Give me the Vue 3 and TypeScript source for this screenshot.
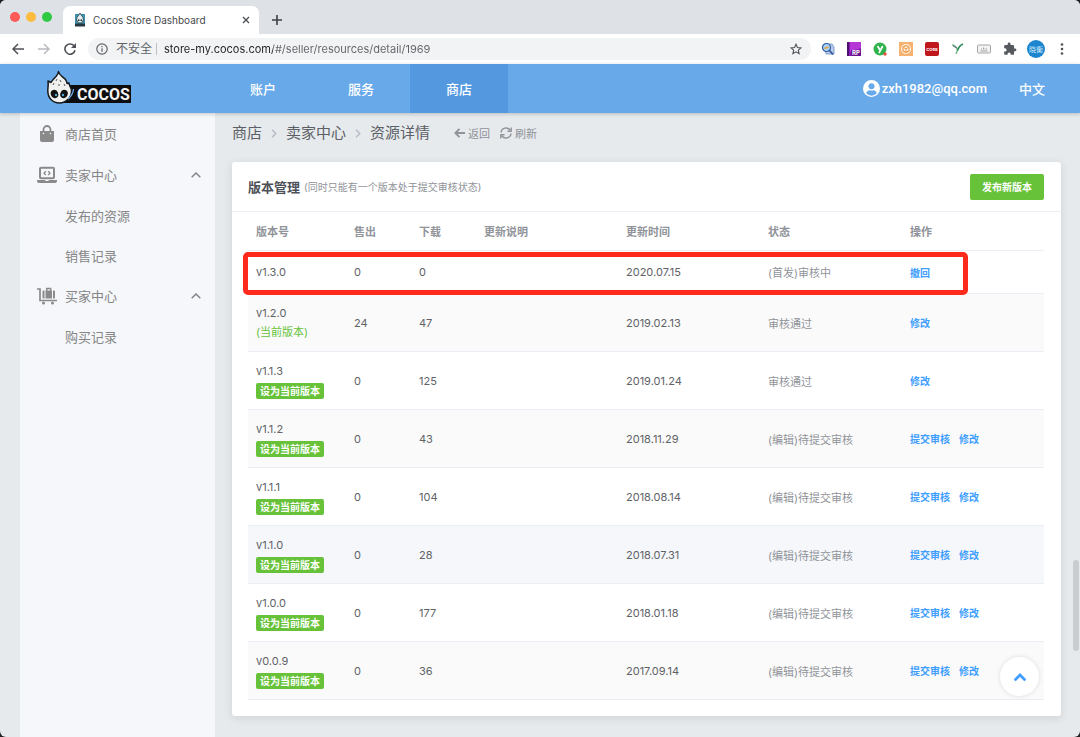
<script setup lang="ts">
import { ref } from 'vue'

interface Version {
  name: string
  sold: number
  downloads: number
  date: string
  status: string
  actions: string[]
  current?: boolean
  settable?: boolean
  hover?: boolean
}

const url = ref('store-my.cocos.com/#/seller/resources/detail/1969')

const columns = ['版本号', '售出', '下载', '更新说明', '更新时间', '状态', '操作']
const pending = '(编辑)待提交审核'
const both = ['提交审核', '修改']

const versions: Version[] = [
  { name: 'v1.3.0', sold: 0, downloads: 0, date: '2020.07.15', status: '(首发)审核中', actions: ['撤回'] },
  { name: 'v1.2.0', sold: 24, downloads: 47, date: '2019.02.13', status: '审核通过', actions: ['修改'], current: true },
  { name: 'v1.1.3', sold: 0, downloads: 125, date: '2019.01.24', status: '审核通过', actions: ['修改'], settable: true },
  { name: 'v1.1.2', sold: 0, downloads: 43, date: '2018.11.29', status: pending, actions: both, settable: true },
  { name: 'v1.1.1', sold: 0, downloads: 104, date: '2018.08.14', status: pending, actions: both, settable: true },
  { name: 'v1.1.0', sold: 0, downloads: 28, date: '2018.07.31', status: pending, actions: both, settable: true, hover: true },
  { name: 'v1.0.0', sold: 0, downloads: 177, date: '2018.01.18', status: pending, actions: both, settable: true },
  { name: 'v0.0.9', sold: 0, downloads: 36, date: '2017.09.14', status: pending, actions: both, settable: true },
]
</script>

<template>
  <div class="window">
    <div class="tabstrip">
      <div class="lights"><i class="red"></i><i class="yellow"></i><i class="green"></i></div>
      <div class="tab">
        <svg class="favicon" width="10" height="14" viewBox="0 0 10 14">
          <rect y="1" width="10" height="12" fill="#3d93ad" />
          <path d="M5 0c.5 2 3.500 3.500 3.500 6.500 0 2-1.500 3.500-3.500 3.500s-3.500-1.500-3.500-3.500C1.500 3.500 4.500 2 5 0z" fill="#e4eef0" stroke="#26383f" stroke-width=".8" />
          <circle cx="3.600" cy="7.200" r="1" fill="#26383f" /><circle cx="6.400" cy="7.200" r="1" fill="#26383f" />
          <rect y="10.500" width="10" height="3" fill="#26383f" />
        </svg>
        <span class="tab-title">Cocos Store Dashboard</span>
        <button class="icon-btn" aria-label="Close tab">
          <svg width="8" height="8" viewBox="0 0 8 8"><path d="M1 1l6 6M7 1L1 7" stroke="#4a4d51" stroke-width="1.300" /></svg>
        </button>
      </div>
      <button class="icon-btn new-tab" aria-label="New tab">
        <svg width="10" height="10" viewBox="0 0 10 10"><path d="M5 0v10M0 5h10" stroke="#3c4043" stroke-width="1.600" /></svg>
      </button>
    </div>

    <div class="toolbar">
      <button class="icon-btn" aria-label="Back">
        <svg width="12" height="12" viewBox="0 0 12 12" fill="none" stroke="#4f5256" stroke-width="1.500"><path d="M12 6H1M6 1L1 6l5 5" /></svg>
      </button>
      <button class="icon-btn" aria-label="Forward">
        <svg width="12" height="12" viewBox="0 0 12 12" fill="none" stroke="#b9bbbe" stroke-width="1.500"><path d="M0 6h11M6 1l5 5-5 5" /></svg>
      </button>
      <button class="icon-btn" aria-label="Reload">
        <svg width="12" height="12" viewBox="0 0 12 12" fill="none" stroke="#4f5256" stroke-width="1.600"><path d="M10.300 3.300A5.100 5.100 0 1 0 11 7.200" /><path d="M12 0v5H7z" fill="#4f5256" stroke="none" /></svg>
      </button>
      <div class="omnibox">
        <svg width="12" height="12" viewBox="0 0 12 12" fill="none" stroke="#5f6368" stroke-width="1.200"><circle cx="6" cy="6" r="5.200" /><path d="M6 5.200v3.600M6 3v1.300" /></svg>
        <label class="insecure" for="address">不安全</label>
        <span class="bar"></span>
        <input id="address" v-model="url" class="address" type="text" />
        <button class="icon-btn" aria-label="Bookmark">
          <svg width="12" height="12" viewBox="0 0 24 24" fill="none" stroke="#4f5256" stroke-width="2.200"><path d="M12 2.500l2.900 6.500 7.100.7-5.300 4.700 1.500 7-6.200-3.700-6.200 3.700 1.500-7L2 9.700 9.100 9z" /></svg>
        </button>
      </div>
      <div class="extensions">
        <svg viewBox="0 0 14 14"><path d="M4 2h7l2 3v7H5z" fill="#b9cdea" stroke="#6d8fc7" stroke-width=".8" /><circle cx="5.500" cy="5.500" r="4" fill="#a9d4f5" stroke="#31599f" stroke-width="1.200" /><path d="M3.500 6.500l4-1.500" stroke="#e7a23c" stroke-width="1.600" /><path d="M8 8l4 4.500" stroke="#31599f" stroke-width="1.800" /></svg>
        <svg viewBox="0 0 14 14"><path d="M0 0h14v14H0z" fill="#8a1ab5" /><path d="M3 0h11v6L3 10z" fill="#b437d6" /><path d="M0 0h2v14H0z" fill="#4c1168" /><path d="M4 8h10v6H4z" fill="#6a1290" /><text x="5" y="13" fill="#fff" font-size="6" font-weight="700">RP</text></svg>
        <svg viewBox="0 0 14 14"><circle cx="7" cy="7" r="6.500" fill="#2fb34c" /><path d="M4.500 4l2.500 4M9.700 4L6 11" stroke="#fff" stroke-width="1.700" /><circle cx="12" cy="12" r="1.700" fill="#e8503e" /></svg>
        <svg viewBox="0 0 14 14"><path d="M0 0h14v14H0z" fill="#f8b26f" /><circle cx="7" cy="7" r="5" fill="#fff4e6" /><path d="M7 3.500l3 1.700v3.600l-3 1.700-3-1.700V5.200z" fill="none" stroke="#f09b4e" stroke-width="1.200" /><path d="M4.500 5.500L7 7l2.500-1.500M7 7v3" fill="none" stroke="#f09b4e" /></svg>
        <svg viewBox="0 0 14 14"><rect width="14" height="14" rx="2" fill="#c0171d" /><text x="7" y="8.500" fill="#fff" font-size="4" font-weight="700" text-anchor="middle">CORS</text></svg>
        <svg viewBox="0 0 14 14"><path d="M1 3c3 0 4.500 2 5.500 5L5 12" fill="none" stroke="#7cb98a" stroke-width="1.500" /><path d="M12 2c-3 1-4.500 4-5.500 6.500" fill="none" stroke="#2f8f5c" stroke-width="1.700" /><path d="M2 4l4 2" stroke="#55707c" /></svg>
        <svg viewBox="0 0 14 14"><rect x=".5" y="3" width="13" height="8" rx="1" fill="#f3f3f3" stroke="#a6a6a6" /><path d="M3.500 9h7M4.500 7.500v-1M6.500 7.500V5.500M8 7.500v-1M9.500 7.500v-1" stroke="#8c8c8c" stroke-width=".8" /></svg>
        <svg viewBox="0 0 24 24"><path d="M20.500 11H19V7a2 2 0 0 0-2-2h-4V3.500a2.500 2.500 0 0 0-5 0V5H4a2 2 0 0 0-2 2v3.800h1.500a2.700 2.700 0 0 1 0 5.400H2V20a2 2 0 0 0 2 2h3.800v-1.500a2.700 2.700 0 0 1 5.400 0V22H17a2 2 0 0 0 2-2v-4h1.500a2.500 2.500 0 0 0 0-5z" fill="#56595e" /></svg>
      </div>
      <button class="avatar">晓衡</button>
      <button class="icon-btn" aria-label="Menu">
        <svg width="4" height="12" viewBox="0 0 4 12" fill="#4f5256"><circle cx="2" cy="1.500" r="1.300" /><circle cx="2" cy="6" r="1.300" /><circle cx="2" cy="10.500" r="1.300" /></svg>
      </button>
    </div>

    <header class="header">
      <a class="logo" href="#">
        <svg width="86" height="36" viewBox="0 0 86 36">
          <path d="M24 16h61v18H18z" fill="#0d0d0f" />
          <path d="M12.500 2.500c.5 4 4.500 5 7 8 1 1.300 1.300 2.500 1.500 4l2-.5c-.3 2 2 4 2.500 7 .5 7-5 13-12 13S1.700 29 1.800 21.500c0-3 .8-6 .2-9.500l3 1.500C6.500 10 12 7.500 12.500 2.500z" fill="#f1f1ef" stroke="#17191c" stroke-width="1.500" stroke-linejoin="round" />
          <path d="M22 30q5-4 5.500-10" fill="none" stroke="#6aa8e8" stroke-width="1.300" />
          <path d="M10 12l1-2M15 13l-1-2M7 16l1-2M13 17v-2M19 17l-1-2" stroke="#55585c" />
          <ellipse cx="8.500" cy="25" rx="3.700" ry="4.200" transform="rotate(-20 8.500 25)" fill="#111" /><ellipse cx="18" cy="25" rx="3.700" ry="4.200" transform="rotate(20 18 25)" fill="#111" />
          <circle cx="10" cy="26" r="1.200" fill="#4ba7d8" /><circle cx="17" cy="26" r="1.200" fill="#4ba7d8" />
          <text x="31" y="31" fill="#f4f4f4" font-family="Roboto, sans-serif" font-weight="700" font-size="16">COCOS</text>
        </svg>
      </a>
      <nav class="nav">
        <a href="#">账户</a>
        <a href="#">服务</a>
        <a href="#" class="active">商店</a>
      </nav>
      <a class="user" href="#">
        <svg width="17" height="17" viewBox="0 0 17 17"><circle cx="8.500" cy="8.500" r="8.500" fill="#fff" /><circle cx="8.500" cy="6.300" r="3" fill="#68a9ea" /><path d="M3.200 13.200c.6-2 2-2.900 3.600-2.900.6.300 2.800.300 3.400 0 1.600 0 3 .9 3.600 2.900a7 7 0 0 1-10.600 0z" fill="#68a9ea" /></svg>
        <span>zxh1982@qq.com</span>
      </a>
      <a class="lang" href="#">中文</a>
    </header>

    <div class="body">
      <aside class="sidebar">
        <a href="#">
          <svg width="20" height="18" viewBox="0 0 20 18"><path d="M3 6h14v9a2 2 0 0 1-2 2H5a2 2 0 0 1-2-2z" fill="#8a8a8a" /><path d="M6.500 8V4.500a3.500 3.500 0 0 1 7 0V8" fill="none" stroke="#8a8a8a" stroke-width="1.800" /><circle cx="6.500" cy="8.500" r=".8" fill="#f5f7fb" /><circle cx="13.500" cy="8.500" r=".8" fill="#f5f7fb" /></svg>
          <span>商店首页</span>
        </a>
        <a href="#">
          <svg width="20" height="18" viewBox="0 0 20 18" fill="none" stroke="#8a8a8a"><rect x="3" y="1.800" width="14" height="10.500" rx="1" stroke-width="2" /><path d="M8.800 5.300L7 7.200l1.800 1.900M11.200 5.300L13 7.200l-1.800 1.900" stroke-width="1.300" /><path d="M0 14h8l.6 1h2.800l.6-1h8v1a2 2 0 0 1-2 2H2a2 2 0 0 1-2-2z" fill="#8a8a8a" stroke="none" /></svg>
          <span>卖家中心</span>
          <svg class="chev" width="10" height="6" viewBox="0 0 10 6"><path d="M.7 5.300L5 1l4.300 4.300" /></svg>
        </a>
        <a href="#" class="sub">发布的资源</a>
        <a href="#" class="sub">销售记录</a>
        <a href="#">
          <svg width="20" height="18" viewBox="0 0 20 18"><path d="M0 2h3v11.500h17" fill="none" stroke="#8a8a8a" stroke-width="1.700" /><circle cx="6.500" cy="16" r="1.500" fill="#8a8a8a" /><circle cx="15.500" cy="16" r="1.500" fill="#8a8a8a" /><path d="M8.500 3.500h6.500v8H8.500zM5.500 4.500q0-1 1-1h1v8h-1q-1 0-1-1zM16 3.500h1q1 0 1 1v6q0 1-1 1h-1z" fill="#8a8a8a" /><path d="M9.700 4V1.500h4V4" fill="none" stroke="#8a8a8a" stroke-width="1.400" /></svg>
          <span>买家中心</span>
          <svg class="chev" width="10" height="6" viewBox="0 0 10 6"><path d="M.7 5.300L5 1l4.300 4.300" /></svg>
        </a>
        <a href="#" class="sub">购买记录</a>
      </aside>

      <main class="main">
        <div class="crumbs">
          <a href="#">商店</a>
          <svg class="sep" width="6" height="9" viewBox="0 0 6 9"><path d="M1 .8l3.700 3.700L1 8.200" /></svg>
          <a href="#">卖家中心</a>
          <svg class="sep" width="6" height="9" viewBox="0 0 6 9"><path d="M1 .8l3.700 3.700L1 8.200" /></svg>
          <a href="#">资源详情</a>
          <div class="tools">
            <button>
              <svg width="11" height="10" viewBox="0 0 11 10" fill="none" stroke="#909399" stroke-width="1.800"><path d="M11 5H1.500M5.500.8L1.300 5l4.200 4.200" /></svg>返回
            </button>
            <button>
              <svg width="12" height="12" viewBox="0 0 12 12" fill="none" stroke="#909399" stroke-width="1.400"><path d="M1 5.500A5 5 0 0 1 10 3M11 6.500A5 5 0 0 1 2 9M11.200.5v3.700H7.500M.8 11.500V7.800h3.700" /></svg>刷新
            </button>
          </div>
        </div>

        <section class="card">
          <div class="card-head">
            <h1>版本管理</h1>
            <small>(同时只能有一个版本处于提交审核状态)</small>
            <button class="publish">发布新版本</button>
          </div>
          <div class="table-wrap">
            <table>
              <colgroup><col class="c-name" /><col class="c-num" /><col class="c-num" /><col /><col /><col /><col /></colgroup>
              <thead>
                <tr><th v-for="c in columns" :key="c" scope="col">{{ c }}</th></tr>
              </thead>
              <tbody>
                <tr v-for="v in versions" :key="v.name" :class="{ hover: v.hover, tall: v.current || v.settable }">
                  <td>
                    <div class="name">{{ v.name }}</div>
                    <div v-if="v.current" class="current">(当前版本)</div>
                    <button v-if="v.settable" class="set">设为当前版本</button>
                  </td>
                  <td>{{ v.sold }}</td>
                  <td>{{ v.downloads }}</td>
                  <td></td>
                  <td>{{ v.date }}</td>
                  <td class="status">{{ v.status }}</td>
                  <td><button v-for="a in v.actions" :key="a" class="act">{{ a }}</button></td>
                </tr>
              </tbody>
            </table>
            <div class="marker"></div>
          </div>
        </section>
      </main>

      <button class="to-top" aria-label="Back to top">
        <svg width="12" height="8" viewBox="0 0 12 8"><path d="M1.500 6.500L6 2l4.500 4.500" fill="none" stroke="#409eff" stroke-width="2.800" stroke-linecap="round" /></svg>
      </button>
      <div class="scroll-thumb"></div>
    </div>
  </div>
</template>

<style>
body {
  margin: 0;
  background: #222;
}
</style>

<style scoped>
* {
  box-sizing: border-box;
}
.window {
  display: flex;
  flex-direction: column;
  min-height: 100vh;
  overflow: hidden;
  border-radius: 6px;
  background: #e6eaed;
  font-family: Inter, 'Noto Sans CJK SC', sans-serif;
}
button {
  border: 0;
  padding: 0;
  background: none;
  font-family: inherit;
  cursor: pointer;
}
a {
  color: inherit;
  text-decoration: none;
}
svg {
  display: block;
  flex: none;
}
.icon-btn {
  display: flex;
  align-items: center;
  justify-content: center;
}

/* Browser chrome */
.tabstrip {
  display: flex;
  align-items: center;
  height: 34px;
  padding-left: 10px;
  background: #dee1e6;
}
.lights {
  display: flex;
  gap: 6px;
  width: 53px;
}
.lights i {
  width: 10px;
  height: 10px;
  border-radius: 50%;
}
.red { background: #fc5b57; }
.yellow { background: #fdbc40; }
.green { background: #2fca44; }
.tab {
  display: flex;
  align-items: center;
  align-self: flex-end;
  width: 196px;
  height: 28px;
  padding: 0 9px 0 12px;
  border-radius: 7px 7px 0 0;
  background: #fff;
}
.tab-title {
  flex: 1;
  margin-left: 8px;
  font-size: 10px;
  color: #45484c;
}
.new-tab {
  margin-left: 13px;
  padding-top: 6px;
}
.toolbar {
  display: flex;
  align-items: center;
  gap: 14px;
  height: 30px;
  padding: 0 16px 0 12px;
  background: #fff;
}
.omnibox {
  display: flex;
  flex: 1;
  align-items: center;
  height: 22px;
  margin: 0 -4px 0 -2px;
  padding: 0 9px 0 8px;
  border-radius: 11px;
  background: #f1f3f4;
}
.insecure {
  margin-left: 8px;
  font-size: 12px;
  line-height: 20px;
  color: #5f6368;
}
.bar {
  width: 1px;
  height: 12px;
  margin: 0 7px 0 4px;
  background: #bdc1c6;
}
.address {
  flex: 1;
  min-width: 0;
  border: 0;
  padding: 0;
  outline: 0;
  color: transparent;
  background: linear-gradient(90deg, #202124 109px, #5f6368 109px);
  background-clip: text;
  font: 11px Inter, sans-serif;
}
.extensions {
  display: flex;
  gap: 12px;
}
.extensions svg {
  width: 14px;
  height: 14px;
}
.avatar {
  width: 18px;
  height: 18px;
  margin: 0 1px 0 -4px;
  border-radius: 50%;
  background: #1d86cf;
  color: #d9eefc;
  font-size: 7px;
  white-space: nowrap;
}

/* Site header */
.header {
  position: relative;
  z-index: 1;
  display: flex;
  align-items: center;
  height: 49px;
  padding: 0 35px 0 46px;
  background: #68a9ea;
  box-shadow: 0 1px 4px rgba(0, 0, 0, 0.2);
  color: #fff;
  font-size: 13px;
  font-weight: 500;
}
.logo {
  width: 168px;
  padding-bottom: 4px;
}
.nav {
  display: flex;
  align-self: stretch;
  flex: 1;
}
.nav a {
  display: flex;
  align-items: center;
  justify-content: center;
  width: 98px;
}
.nav .active {
  background: #5499e0;
}
.user {
  display: flex;
  align-items: center;
  gap: 2px;
  margin-right: 32px;
  font-family: Roboto, sans-serif;
}

/* Page */
.body {
  position: relative;
  display: flex;
  flex: 1;
}
.sidebar {
  width: 195px;
  margin-left: 20px;
  background: #f5f7fb;
  color: #868686;
  font-size: 13px;
}
.sidebar a {
  display: flex;
  align-items: center;
  gap: 8px;
  height: 41px;
  padding: 0 14px 0 17px;
}
.sidebar .sub {
  height: 40px;
  padding-left: 45px;
}
.chev {
  margin-left: auto;
  fill: none;
  stroke: #868686;
  stroke-width: 1.5;
}
.main {
  flex: 1;
  padding: 0 19px 20px 17px;
}
.crumbs {
  display: flex;
  align-items: center;
  height: 40px;
  margin-bottom: 9px;
  color: #5c5f65;
  font-size: 15px;
  line-height: 20px;
}
.sep {
  margin: 0 9px;
  fill: none;
  stroke: #b7bcc5;
  stroke-width: 1.5;
}
.tools {
  display: flex;
  gap: 10px;
  margin-left: 24px;
}
.tools button {
  display: flex;
  align-items: center;
  gap: 3px;
  color: #909399;
  font-size: 11px;
}
.card {
  border-radius: 3px;
  background: #fff;
  box-shadow: 0 2px 10px rgba(0, 0, 0, 0.1);
}
.card-head {
  display: flex;
  align-items: center;
  height: 50px;
  padding: 0 17px 0 16px;
  border-bottom: 1px solid #ebeef5;
}
h1 {
  margin: 0;
  color: #4d5056;
  font-size: 13px;
  font-weight: 700;
}
small {
  margin-left: 4px;
  color: #909399;
  font-size: 10px;
}
.publish {
  height: 26px;
  margin-left: auto;
  padding: 0 12px;
  border-radius: 2px;
  background: #67c23a;
  color: #fff;
  font-size: 10px;
  font-weight: 700;
}
.table-wrap {
  position: relative;
  padding: 0 17px 16px 16px;
}
table {
  width: 100%;
  table-layout: fixed;
  border-collapse: separate;
  border-spacing: 0;
  color: #606266;
  font-size: 11px;
}
.c-name { width: 98px; }
.c-num { width: 65px; }
th,
td {
  height: 43px;
  padding: 0 0 0 8px;
  border-bottom: 1px solid #ebeef5;
  text-align: left;
}
th {
  height: 39px;
  color: #909399;
  font-weight: 700;
}
.tall td {
  height: 58px;
}
tbody tr:nth-child(even) td {
  background: #fafafa;
}
tbody tr.hover td {
  background: #f5f7fb;
}
.name {
  line-height: 19px;
}
.current {
  color: #67c23a;
  line-height: 19px;
}
.set {
  display: block;
  height: 16px;
  margin-top: 2px;
  padding: 0 4px;
  border-radius: 2px;
  background: #67c23a;
  color: #fff;
  font-size: 10px;
  font-weight: 700;
  line-height: 16px;
}
.status {
  color: #909399;
}
.act {
  margin-right: 9px;
  color: #409eff;
  font-size: 10px;
  font-weight: 700;
}
.marker {
  position: absolute;
  top: 40px;
  left: 11px;
  right: 93px;
  height: 43px;
  border: 5px solid #fe2a1c;
  border-radius: 5px;
}
.to-top {
  position: absolute;
  right: 41px;
  bottom: 41px;
  display: flex;
  align-items: center;
  justify-content: center;
  width: 39px;
  height: 39px;
  border-radius: 50%;
  background: #fff;
  box-shadow: 0 0 5px rgba(0, 0, 0, 0.12);
}
.scroll-thumb {
  position: absolute;
  right: 1px;
  bottom: 86px;
  width: 6px;
  height: 91px;
  border-radius: 3px;
  background: #c9cdd0;
}
</style>
